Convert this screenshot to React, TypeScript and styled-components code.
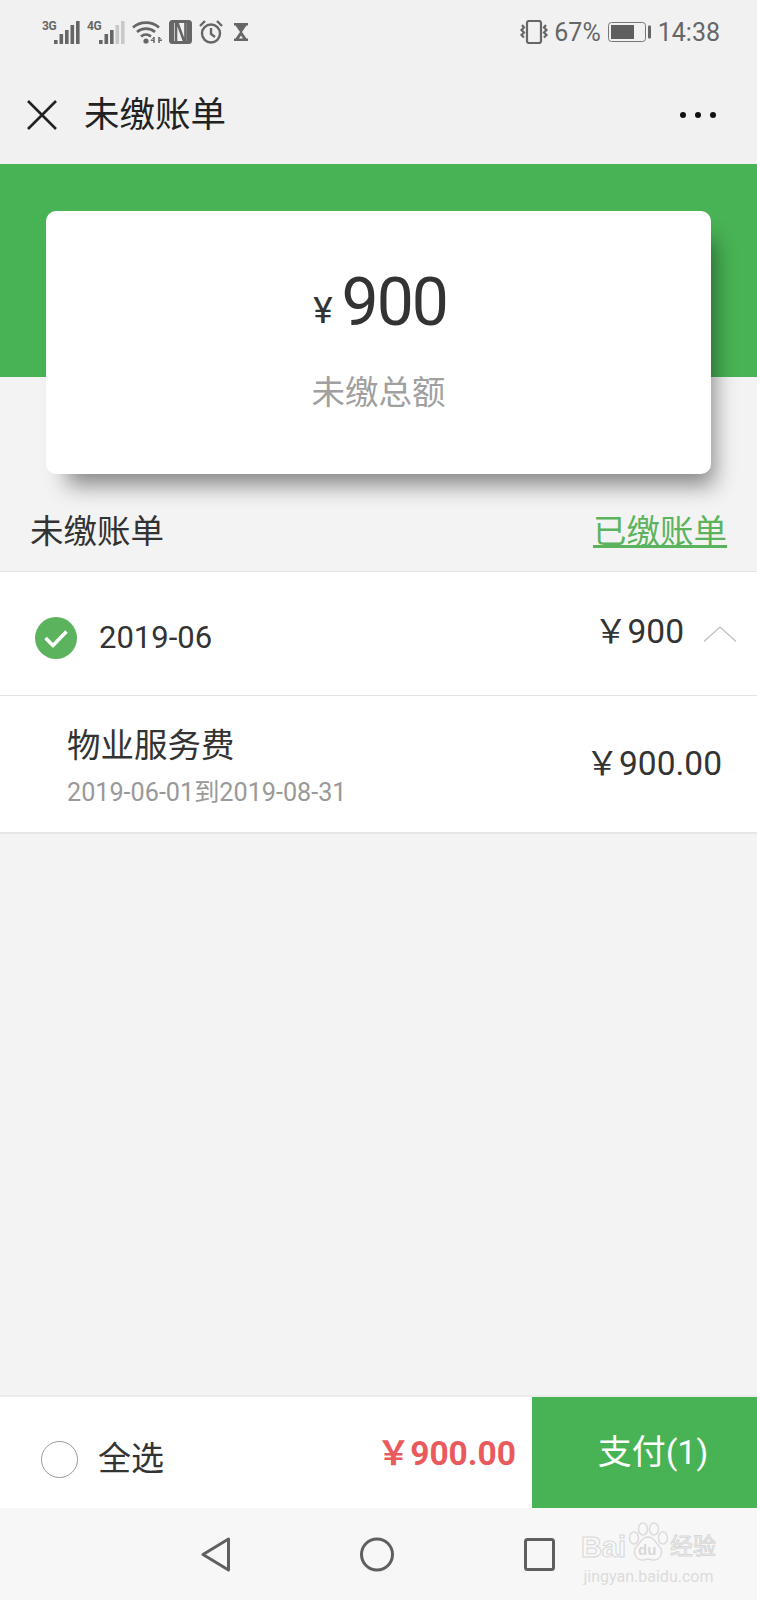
import styled, { createGlobalStyle } from 'styled-components';

const GlobalStyle = createGlobalStyle`
	html, body {
		margin: 0;
		padding: 0;
		background: #f3f3f3;
	}
	* {
		box-sizing: border-box;
	}
`;

const fontStack = `Roboto, "Noto Sans CJK SC", sans-serif`;
const YEN = '\uFFE5';

const SignalIcon = ({ label, lit }: { label: string; lit: number }) => {
	const bars = [
		{ x: 0, h: 4 },
		{ x: 5.5, h: 10 },
		{ x: 11, h: 14 },
		{ x: 16.5, h: 19 },
		{ x: 22, h: 23 },
	];
	return (
		<Signal>
			<SignalLabel>{label}</SignalLabel>
			<svg width="26" height="24" viewBox="0 0 26 24">
				{bars.map((b, i) => (
					<rect
						key={b.x}
						x={b.x}
						y={24 - b.h}
						width="3.6"
						height={b.h}
						fill={i < lit ? '#666' : '#c8c8c8'}
					/>
				))}
			</svg>
		</Signal>
	);
};

const WifiIcon = () => (
	<svg width="30" height="24" viewBox="0 0 30 24" fill="none" stroke="#666" strokeWidth="2.6">
		<path d="M1 7.500C8 1 20 1 27 7.500" />
		<path d="M5 12C10 7.500 18 7.500 23 12" />
		<path d="M9 16.500C12 14 16 14 19 16.500" />
		<circle cx="14" cy="21" r="2.600" fill="#666" stroke="none" />
		<path d="M22 17v6M27 17v6" strokeWidth="1.500" />
		<path d="M22 17l-3 3.500h3M27 17l3 3.500h-3" strokeWidth="1" />
	</svg>
);

const NfcIcon = () => (
	<svg width="23" height="24" viewBox="0 0 23 24">
		<rect width="23" height="24" rx="3.500" fill="#666" />
		<rect x="5" y="3" width="13" height="18" fill="#f1f1f1" />
		<path d="M7 21V3h1.500l6.500 18h1.500V3" fill="none" stroke="#666" strokeWidth="2.600" />
	</svg>
);

const AlarmIcon = () => (
	<svg width="24" height="24" viewBox="0 0 24 24" fill="none" stroke="#666" strokeWidth="2.400">
		<circle cx="12" cy="13.500" r="9" />
		<path d="M12 8v6l4 3" />
		<path d="M1 6l5-5M23 6l-5-5" />
	</svg>
);

const HourglassIcon = () => (
	<svg width="14" height="18" viewBox="0 0 14 18">
		<path d="M0 0h14v2.500h-1.500L8 9l4.500 6.500H14V18H0v-2.500h1.500L6 9 1.500 2.500H0z" fill="#666" />
		<path d="M5 15.500L7 12.500l2 3z" fill="#f1f1f1" />
	</svg>
);

const VibrateIcon = () => (
	<svg width="30" height="24" viewBox="0 0 30 24" fill="none" stroke="#666">
		<rect x="8" y="1" width="14" height="22" rx="2" strokeWidth="2.200" />
		<path d="M3 5l2 2.500-2.500 2.500 2.500 2.500-2.500 2.500 2.500 2.500" strokeWidth="2.200" />
		<path d="M27 5l-2 2.500 2.500 2.500-2.500 2.500 2.500 2.500-2.500 2.500" strokeWidth="2.200" />
	</svg>
);

const BatteryIcon = () => (
	<svg width="44" height="20" viewBox="0 0 44 20">
		<rect x="0.500" y="0.500" width="37" height="19" rx="3" fill="none" stroke="#777" />
		<rect x="3" y="3" width="23" height="14" fill="#5f5f5f" />
		<rect x="40" y="3.500" width="3" height="13" rx="1" fill="#666" />
	</svg>
);

const CloseIcon = () => (
	<svg width="30" height="30" viewBox="0 0 30 30" stroke="#222" strokeWidth="2.600">
		<path d="M1 1l28 28M29 1L1 29" />
	</svg>
);

const CheckedIcon = () => (
	<svg width="42" height="42" viewBox="0 0 42 42">
		<circle cx="21" cy="21" r="21" fill="#5cb35e" />
		<path d="M10.500 21l7.500 7.500 13.500-14" fill="none" stroke="#fff" strokeWidth="3.600" />
	</svg>
);

const ChevronUp = () => (
	<svg width="34" height="16" viewBox="0 0 34 16" fill="none" stroke="#bdbdbd" strokeWidth="1.200">
		<path d="M1 15.500L17 1l16 14.500" />
	</svg>
);

const BackIcon = () => (
	<svg width="29" height="35" viewBox="0 0 29 35" fill="none" stroke="#5f5f5f" strokeWidth="3" strokeLinejoin="round">
		<path d="M27.500 2v31L2 17.500z" />
	</svg>
);

const HomeIcon = () => (
	<svg width="34" height="35" viewBox="0 0 34 35" fill="none" stroke="#5f5f5f" strokeWidth="3">
		<circle cx="17" cy="17.500" r="15.500" />
	</svg>
);

const RecentIcon = () => (
	<svg width="31" height="33" viewBox="0 0 31 33" fill="none" stroke="#5f5f5f" strokeWidth="3">
		<rect x="1.500" y="1.500" width="28" height="30" rx="2" />
	</svg>
);

const PawIcon = () => (
	<svg width="44" height="42" viewBox="0 0 44 40" fill="#f8f8f8" stroke="#dcdcdc" strokeWidth="1.500">
		<ellipse cx="8" cy="16" rx="4.500" ry="6" />
		<ellipse cx="17" cy="7" rx="4.500" ry="6" />
		<ellipse cx="28" cy="7" rx="4.500" ry="6" />
		<ellipse cx="37" cy="16" rx="4.500" ry="6" />
		<path d="M22 15c-6 0-7 5-11 9-5 5-2 14 5 14 3 0 4-1 6-1s3 1 6 1c7 0 10-9 5-14-4-4-5-9-11-9z" />
	</svg>
);

const App = () => {
	return (
		<Page>
			<GlobalStyle />
			<StatusBar>
				<StatusLeft>
					<SignalIcon label="3G" lit={5} />
					<SignalIcon label="4G" lit={3} />
					<WifiIcon />
					<NfcIcon />
					<AlarmIcon />
					<HourglassSlot>
						<HourglassIcon />
					</HourglassSlot>
				</StatusLeft>
				<StatusRight>
					<VibrateIcon />
					<Percent>67%</Percent>
					<BatteryIcon />
					<Clock>14:38</Clock>
				</StatusRight>
			</StatusBar>

			<NavBar>
				<NavLeft>
					<CloseIcon />
					<NavTitle>未缴账单</NavTitle>
				</NavLeft>
				<MoreDots>
					<Dot />
					<Dot />
					<Dot />
				</MoreDots>
			</NavBar>

			<Hero>
				<SummaryCard>
					<TotalLine>
						<TotalYen>¥</TotalYen>
						<TotalValue>900</TotalValue>
					</TotalLine>
					<TotalLabel>未缴总额</TotalLabel>
				</SummaryCard>
			</Hero>

			<SectionHeader>
				<SectionTitle>未缴账单</SectionTitle>
				<PaidLink>已缴账单</PaidLink>
			</SectionHeader>

			<MonthRow>
				<MonthLeft>
					<CheckedIcon />
					<MonthText>2019-06</MonthText>
				</MonthLeft>
				<MonthRight>
					<MonthAmount>{YEN}900</MonthAmount>
					<ChevronSlot>
						<ChevronUp />
					</ChevronSlot>
				</MonthRight>
			</MonthRow>

			<BillRow>
				<BillInfo>
					<BillName>物业服务费</BillName>
					<BillPeriod>2019-06-01到2019-08-31</BillPeriod>
				</BillInfo>
				<Amount>{YEN}900.00</Amount>
			</BillRow>

			<Spacer />

			<PayBar>
				<SelectAll>
					<Radio />
					<SelectLabel>全选</SelectLabel>
				</SelectAll>
				<PayTotal>{YEN}900.00</PayTotal>
				<PayButton>支付(1)</PayButton>
			</PayBar>

			<SystemNav>
				<BackIcon />
				<HomeIcon />
				<RecentIcon />
				<Watermark>
					<WatermarkLogo>
						<WatermarkWord>Bai</WatermarkWord>
						<PawSlot>
							<PawIcon />
							<PawText>du</PawText>
						</PawSlot>
						<WatermarkCn>经验</WatermarkCn>
					</WatermarkLogo>
					<WatermarkUrl>jingyan.baidu.com</WatermarkUrl>
				</Watermark>
			</SystemNav>
		</Page>
	);
};

const Page = styled.div`
	width: 757px;
	height: 1600px;
	display: flex;
	flex-direction: column;
	background: #f3f3f3;
	font-family: ${fontStack};
	overflow: hidden;
`;

const StatusBar = styled.div`
	height: 66px;
	display: flex;
	justify-content: space-between;
	align-items: flex-start;
	padding: 20px 37px 0 42px;
	background: #f1f1f1;
`;

const StatusLeft = styled.div`
	display: flex;
	align-items: center;
	gap: 7px;
	height: 24px;
`;

const Signal = styled.div`
	display: flex;
	align-items: flex-start;
	width: 38px;
`;

const SignalLabel = styled.span`
	width: 12px;
	font-size: 12px;
	line-height: 12px;
	font-weight: 700;
	letter-spacing: -0.5px;
	white-space: nowrap;
	color: #666;
`;

const HourglassSlot = styled.div`
	display: flex;
	margin-left: 4px;
`;

const StatusRight = styled.div`
	display: flex;
	align-items: center;
	height: 24px;
	color: #666;
	font-size: 25px;
`;

const Percent = styled.span`
	margin: 0 7px 0 5px;
`;

const Clock = styled.span`
	margin-left: 6px;
`;

const NavBar = styled.div`
	height: 98px;
	display: flex;
	justify-content: space-between;
	align-items: center;
	padding: 0 41px 0 27px;
	background: #f1f1f1;
`;

const NavLeft = styled.div`
	display: flex;
	align-items: center;
	gap: 27px;
`;

const NavTitle = styled.div`
	font-size: 35.5px;
	line-height: 44px;
	color: #222;
`;

const MoreDots = styled.div`
	display: flex;
	gap: 9px;
`;

const Dot = styled.span`
	width: 6px;
	height: 6px;
	border-radius: 50%;
	background: #111;
`;

const Hero = styled.div`
	height: 213px;
	padding: 47px 46px 0;
	background: #48b354;
`;

const SummaryCard = styled.div`
	height: 263px;
	display: flex;
	flex-direction: column;
	align-items: center;
	padding-top: 53px;
	background: #fff;
	border-radius: 10px;
	box-shadow: 12px 20px 22px -9px rgba(0, 0, 0, 0.45);
`;

const TotalLine = styled.div`
	display: flex;
	align-items: baseline;
	height: 78px;
	padding-left: 3px;
	color: #333;
`;

const TotalYen = styled.span`
	position: relative;
	top: -2px;
	font-size: 37px;
	margin-right: 9px;
`;

const TotalValue = styled.span`
	font-size: 66px;
	line-height: 78px;
	letter-spacing: -2px;
`;

const TotalLabel = styled.div`
	margin-top: 29px;
	font-size: 33.5px;
	line-height: 44px;
	color: #a0a0a0;
`;

const SectionHeader = styled.div`
	height: 98px;
	margin-top: 97px;
	display: flex;
	justify-content: space-between;
	align-items: center;
	padding: 18px 30px 0 30px;
	border-bottom: 1px solid #e4e4e4;
`;

const SectionTitle = styled.div`
	font-size: 33.5px;
	line-height: 44px;
	color: #333;
`;

const PaidLink = styled.a`
	font-size: 33.5px;
	line-height: 44px;
	color: #5cb35e;
	text-decoration: underline;
	text-underline-offset: 2px;
`;

const MonthRow = styled.div`
	height: 124px;
	display: flex;
	justify-content: space-between;
	align-items: center;
	padding: 0 20px 0 35px;
	background: #fff;
	border-bottom: 1px solid #e4e4e4;
`;

const MonthLeft = styled.div`
	display: flex;
	align-items: center;
	gap: 22px;
	padding-top: 8px;
`;

const MonthText = styled.div`
	font-size: 31px;
	line-height: 40px;
	color: #333;
`;

const MonthRight = styled.div`
	display: flex;
	align-items: center;
	gap: 19px;
`;

const ChevronSlot = styled.div`
	display: flex;
`;

const Amount = styled.div`
	font-size: 33.5px;
	line-height: 40px;
	color: #333;
`;

const MonthAmount = styled(Amount)`
	margin-top: -4px;
`;

const BillRow = styled.div`
	height: 138px;
	display: flex;
	justify-content: space-between;
	align-items: center;
	padding: 0 35px 0 67px;
	background: #fff;
	border-bottom: 2px solid #e6e6e6;
`;

const BillInfo = styled.div`
	display: flex;
	flex-direction: column;
	gap: 9px;
	padding-top: 5px;
`;

const BillName = styled.div`
	font-size: 33.5px;
	line-height: 44px;
	color: #333;
`;

const BillPeriod = styled.div`
	font-size: 25.2px;
	line-height: 32px;
	color: #999;
`;

const Spacer = styled.div`
	flex: 1;
`;

const PayBar = styled.div`
	height: 113px;
	display: flex;
	align-items: stretch;
	background: #fff;
	border-top: 2px solid #ececec;
`;

const SelectAll = styled.div`
	flex: 1;
	display: flex;
	align-items: center;
	gap: 20px;
	padding: 13px 0 0 41px;
`;

const Radio = styled.span`
	width: 37px;
	height: 37px;
	border: 1px solid #999;
	border-radius: 50%;
`;

const SelectLabel = styled.span`
	margin-top: -6px;
	font-size: 33px;
	color: #333;
`;

const PayTotal = styled.div`
	display: flex;
	align-items: center;
	margin-right: 16px;
	padding-bottom: 4px;
	font-size: 33.5px;
	font-weight: 700;
	color: #ea5a5c;
`;

const PayButton = styled.div`
	width: 225px;
	display: flex;
	align-items: center;
	justify-content: center;
	padding: 0 0 6px 17px;
	font-size: 34px;
	color: #fff;
	background: #48b354;
`;

const SystemNav = styled.div`
	position: relative;
	height: 92px;
	display: flex;
	align-items: center;
	gap: 130px;
	padding: 0 0 0 201px;
	background: #f7f7f7;
`;

const Watermark = styled.div`
	position: absolute;
	left: 580px;
	top: 9px;
	width: 137px;
	display: flex;
	flex-direction: column;
	align-items: center;
`;

const WatermarkLogo = styled.div`
	display: flex;
	align-items: flex-end;
	height: 46px;
`;

const WatermarkWord = styled.span`
	font-family: 'Liberation Sans', sans-serif;
	font-size: 29px;
	line-height: 32px;
	font-weight: 700;
	color: #f8f8f8;
	-webkit-text-stroke: 1px #d8d8d8;
`;

const PawSlot = styled.span`
	position: relative;
	display: flex;
`;

const PawText = styled.span`
	position: absolute;
	left: 12px;
	bottom: 5px;
	font-family: 'Liberation Sans', sans-serif;
	font-size: 15px;
	font-weight: 700;
	color: #d8d8d8;
`;

const WatermarkCn = styled.span`
	font-size: 23px;
	line-height: 32px;
	color: #f8f8f8;
	-webkit-text-stroke: 1px #d8d8d8;
`;

const WatermarkUrl = styled.div`
	margin-top: 5px;
	font-size: 16px;
	line-height: 18px;
	color: #dcdcdc;
`;

export default App;
